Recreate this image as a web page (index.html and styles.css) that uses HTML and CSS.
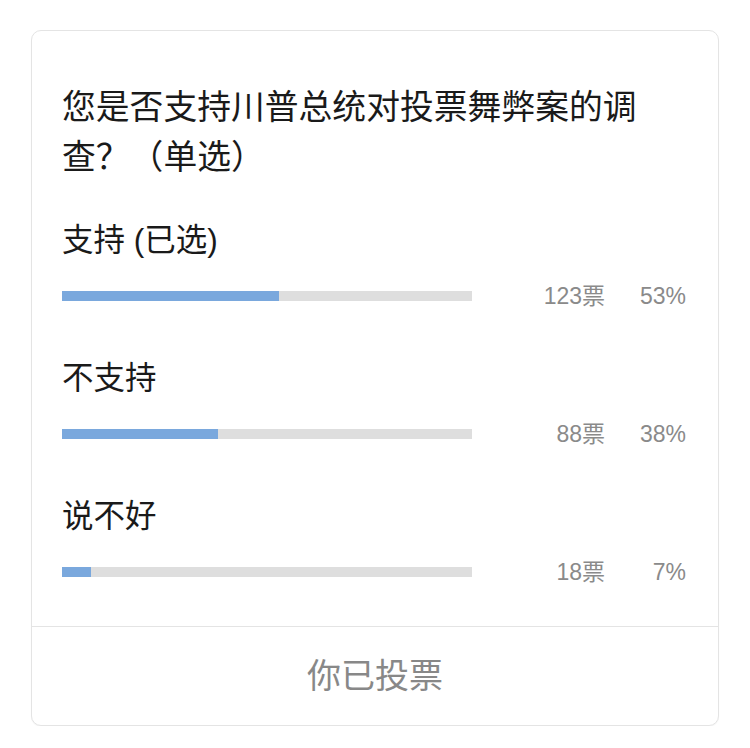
FILE: index.html
```html
<!DOCTYPE html>
<html lang="zh-CN">
<head>
<meta charset="utf-8">
<title>投票</title>
<link rel="stylesheet" href="styles.css">
</head>
<body>
<div class="card">
  <div class="body">
    <div class="title">您是否支持川普总统对投票舞弊案的调查？（单选）</div>
    <div class="option">
      <div class="label">支持 (已选)</div>
      <div class="row">
        <div class="bar"><div class="fill" style="width:53%"></div></div>
        <div class="count">123票</div>
        <div class="pct">53%</div>
      </div>
    </div>
    <div class="option">
      <div class="label">不支持</div>
      <div class="row">
        <div class="bar"><div class="fill" style="width:38%"></div></div>
        <div class="count">88票</div>
        <div class="pct">38%</div>
      </div>
    </div>
    <div class="option last">
      <div class="label">说不好</div>
      <div class="row">
        <div class="bar"><div class="fill" style="width:7%"></div></div>
        <div class="count">18票</div>
        <div class="pct">7%</div>
      </div>
    </div>
  </div>
  <div class="footer">你已投票</div>
</div>
</body>
</html>
```
FILE: styles.css
```css
html, body {
  margin: 0;
  padding: 0;
  background: #ffffff;
}
body {
  font-family: "Liberation Sans", "Noto Sans CJK SC", sans-serif;
  color: #1a1a1a;
}
.card {
  box-sizing: border-box;
  width: 688px;
  margin: 30px 0 0 31px;
  border: 1px solid #e4e4e4;
  border-radius: 10px;
  box-shadow: 0 1px 1px rgba(0, 0, 0, 0.04);
  background: #fff;
}
.body {
  padding: 51px 30px 39px 30px;
}
.title {
  font-size: 33.8px;
  line-height: 50px;
  margin-bottom: 38px;
}
.option {
  margin-bottom: 47px;
}
.option.last {
  margin-bottom: 0;
}
.label {
  font-size: 31.5px;
  line-height: 40px;
  height: 40px;
  margin-bottom: 21px;
}
.row {
  display: flex;
  align-items: center;
  height: 30px;
}
.bar {
  width: 410px;
  height: 10px;
  background: #dedede;
  flex: none;
}
.fill {
  height: 100%;
  background: #7aa8dd;
}
.count {
  width: 133px;
  flex: none;
  text-align: right;
  font-size: 23px;
  line-height: 32px;
  color: #8a8a8a;
}
.pct {
  width: 81px;
  flex: none;
  text-align: right;
  font-size: 23px;
  line-height: 32px;
  color: #8a8a8a;
}
.footer {
  border-top: 1px solid #e4e4e4;
  height: 98px;
  line-height: 98px;
  text-align: center;
  font-size: 34px;
  color: #888888;
}
```
